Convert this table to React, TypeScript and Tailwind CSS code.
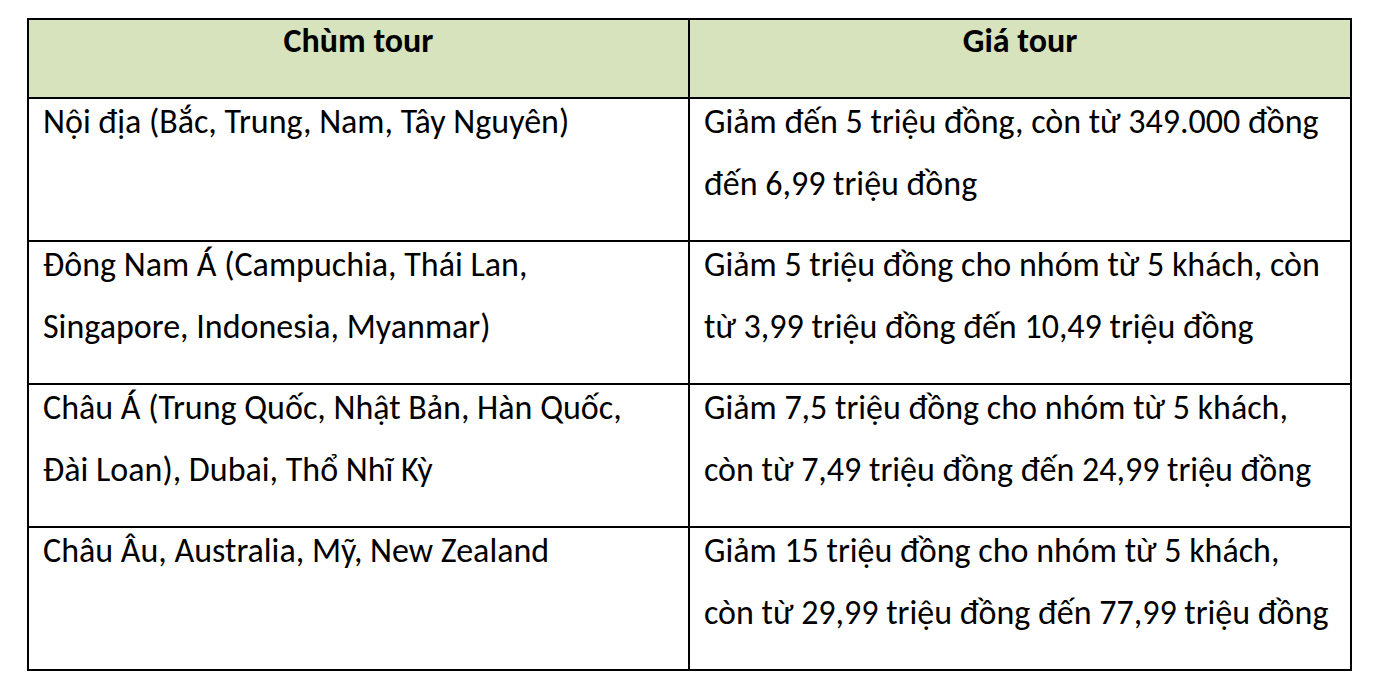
import React from "react";

const rows: { left: string[]; right: string[] }[] = [
  {
    left: ["Nội địa (Bắc, Trung, Nam, Tây Nguyên)"],
    right: ["Giảm đến 5 triệu đồng, còn từ 349.000 đồng", "đến 6,99 triệu đồng"],
  },
  {
    left: ["Đông Nam Á (Campuchia, Thái Lan,", "Singapore, Indonesia, Myanmar)"],
    right: ["Giảm 5 triệu đồng cho nhóm từ 5 khách, còn", "từ 3,99 triệu đồng đến 10,49 triệu đồng"],
  },
  {
    left: ["Châu Á (Trung Quốc, Nhật Bản, Hàn Quốc,", "Đài Loan), Dubai, Thổ Nhĩ Kỳ"],
    right: ["Giảm 7,5 triệu đồng cho nhóm từ 5 khách,", "còn từ 7,49 triệu đồng đến 24,99 triệu đồng"],
  },
  {
    left: ["Châu Âu, Australia, Mỹ, New Zealand"],
    right: ["Giảm 15 triệu đồng cho nhóm từ 5 khách,", "còn từ 29,99 triệu đồng đến 77,99 triệu đồng"],
  },
];

function Lines({ lines }: { lines: string[] }) {
  return (
    <div className="-mt-[8px]">
      {lines.map((l, i) => (
        <div key={i} className="whitespace-nowrap leading-[62px]">
          {l}
        </div>
      ))}
    </div>
  );
}

export default function App() {
  return (
    <div
      className="w-[1381px] h-[690px] bg-white pt-[18px] pl-[27px] text-black text-[34px]"
      style={{ fontFamily: "Carlito, Calibri, Lato, 'Liberation Sans', sans-serif" }}
    >
      <div className="w-[1325px] border-l-2 border-t-2 border-black grid grid-cols-[661px_662px]">
        <div className="h-[79px] bg-[#d7e3bc] border-r-2 border-b-2 border-black text-center font-bold pt-[1px]">
          <div className="leading-[40px]">Chùm tour</div>
        </div>
        <div className="h-[79px] bg-[#d7e3bc] border-r-2 border-b-2 border-black text-center font-bold pt-[1px]">
          <div className="leading-[40px]">Giá tour</div>
        </div>
        {rows.map((r, i) => (
          <React.Fragment key={i}>
            <div className="h-[143px] border-r-2 border-b-2 border-black pl-[14px] overflow-hidden">
              <Lines lines={r.left} />
            </div>
            <div className="h-[143px] border-r-2 border-b-2 border-black pl-[14px] overflow-hidden">
              <Lines lines={r.right} />
            </div>
          </React.Fragment>
        ))}
      </div>
    </div>
  );
}
